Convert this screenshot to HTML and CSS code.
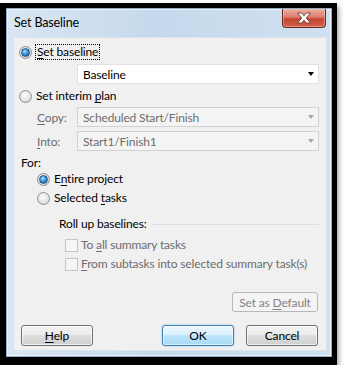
FILE: index.html
```html
<!DOCTYPE html>
<html lang="en">
<head>
    <meta charset="UTF-8">
    <title>Set Baseline</title>
    <link rel="stylesheet" href="styles.css">
</head>

<body>

<div class="shadow">
<div class="window">
    <div class="titlebar">
        <span class="title">Set Baseline</span>
        <div class="close">
            <svg width="16" height="12" viewBox="0 0 16 12">
                <path d="M1.5 1h4.2l2.3 2.8 2.3-2.8h4.2l-4.3 5 4.3 5h-4.2l-2.3-2.8-2.3 2.8h-4.2l4.3-5z" fill="#fff" stroke="#6e3a33" stroke-width="0.9" stroke-linejoin="round"/>
            </svg>
        </div>
    </div>

    <div class="panel">
        <!-- Baseline option -->
        <div class="row first">
            <span class="radio on"></span>
            <span class="label focus"><u>S</u>et baseline</span>
        </div>
        <div class="combo main">
            <span>Baseline</span>
            <span class="arrow"></span>
        </div>

        <!-- Interim plan option -->
        <div class="row second">
            <span class="radio"></span>
            <span class="label">Set interim <u>p</u>lan</span>
        </div>
        <div class="field copy">
            <span class="flabel"><u>C</u>opy:</span>
            <div class="combo off">
                <span>Scheduled Start/Finish</span>
                <span class="arrow"></span>
            </div>
        </div>
        <div class="field into">
            <span class="flabel"><u>I</u>nto:</span>
            <div class="combo off">
                <span>Start1/Finish1</span>
                <span class="arrow"></span>
            </div>
        </div>

        <!-- Scope -->
        <div class="for">For:</div>
        <div class="row sub">
            <span class="radio on"></span>
            <span class="label">E<u>n</u>tire project</span>
        </div>
        <div class="row sub second-sub">
            <span class="radio"></span>
            <span class="label">Selected <u>t</u>asks</span>
        </div>

        <div class="group-head">
            <span>Roll up baselines:</span>
            <span class="sep"></span>
        </div>
        <div class="check-row">
            <span class="check"></span>
            <span class="label">To <u>a</u>ll summary tasks</span>
        </div>
        <div class="check-row second-check">
            <span class="check"></span>
            <span class="label"><u>F</u>rom subtasks into selected summary task(s)</span>
        </div>

        <div class="default-row">
            <button class="btn disabled">Set as <u>D</u>efault</button>
        </div>

        <div class="buttons">
            <button class="btn help"><u>H</u>elp</button>
            <button class="btn ok">OK</button>
            <button class="btn">Cancel</button>
        </div>
    </div>
</div>
</div>

</body>
</html>
```

FILE: styles.css
```css
* {
    box-sizing: border-box;
}
body {
    margin: 0;
    background: #fff;
    font-family: Lato, "Noto Sans", sans-serif;
    font-size: 12px;
    letter-spacing: -0.15px;
    color: #000;
}
u {
    text-underline-offset: 2px;
}
.shadow {
    margin-top: 3px;
    width: 337px;
    height: 362px;
    padding: 5px 5px 8px 6px;
    background: #000;
    box-shadow: 2px 3px 5px rgba(0, 0, 0, 0.35);
}
.window {
    width: 326px;
    height: 349px;
    padding: 0 4px 5px 6px;
    border: 1px solid #8fa9c4;
    box-shadow: inset 0 0 0 1px rgba(255, 255, 255, 0.6);
    background: linear-gradient(to right, #d9e6f3, #c6d9ec 45%, #cfe0f0);
}
.titlebar {
    display: flex;
    align-items: flex-start;
    height: 28px;
}
.title {
    padding: 6px 0 0 1px;
    font-size: 12.5px;
    line-height: 16px;
}
.close {
    margin-left: auto;
    margin-right: 1px;
    width: 44px;
    height: 19px;
    border: 1px solid #6d2c22;
    border-top: none;
    border-radius: 0 0 4px 4px;
    background: linear-gradient(to bottom, #eab0a2, #d97e70 45%, #c4442f 55%, #d0644c);
    display: flex;
    align-items: center;
    justify-content: center;
    box-shadow: inset 0 0 0 1px rgba(255, 200, 190, 0.45);
}
.panel {
    width: 314px;
    height: 314px;
    background: #f0f0f0;
    border: 1px solid #dde3ea;
    padding: 6px 7px 0 5px;
}
.row {
    display: flex;
    align-items: center;
    height: 16px;
}
.row .label {
    margin-left: 4px;
}
.row.second {
    margin-top: 4px;
}
.label {
    line-height: 16px;
    white-space: nowrap;
}
.label.focus {
    margin-left: 3px;
    padding: 0 1px;
    border: 1px dotted #000;
    line-height: 14px;
}
.radio {
    width: 13px;
    height: 13px;
    flex: none;
    border-radius: 50%;
    border: 1px solid #8b8e91;
    background: radial-gradient(circle at 45% 40%, #fdfdfd, #e4e4e4 55%, #cdcdcd);
    display: flex;
    align-items: center;
    justify-content: center;
}
.radio.on::after {
    content: "";
    width: 7px;
    height: 7px;
    border-radius: 50%;
    border: 1px solid #1d5690;
    background: radial-gradient(circle at 40% 35%, #b4e0fb, #3d93d6 45%, #0f4c8a);
}
.combo {
    display: flex;
    align-items: center;
    height: 20px;
    border: 1px solid #e2e2e2;
    background: #fff;
    padding: 0 4px 0 5px;
}
.combo span:first-child {
    flex: 1;
}
.combo.main {
    margin: 4px 0 0 58px;
    width: 242px;
}
.arrow {
    width: 0;
    height: 0;
    border-left: 3.5px solid transparent;
    border-right: 3.5px solid transparent;
    border-top: 4px solid #000;
}
.combo.off {
    background: #f4f4f4;
    border-color: #d2d2d2;
    color: #6d6d6d;
}
.combo.off .arrow {
    border-top-color: #a9a9a9;
}
.field {
    display: flex;
    align-items: center;
    justify-content: space-between;
}
.field.copy {
    margin-top: 3px;
}
.field.into {
    margin-top: 4px;
}
.field .combo {
    width: 242px;
}
.flabel {
    margin-left: 18px;
    color: #6d6d6d;
}
.for {
    margin: 4px 0 0 2px;
    line-height: 16px;
}
.row.sub {
    margin-left: 18px;
}
.row.second-sub {
    margin-top: 3px;
}
.group-head {
    display: flex;
    align-items: center;
    margin: 10px 0 0 40px;
    line-height: 16px;
}
.sep {
    flex: 1;
    height: 1px;
    margin-left: 5px;
    background: #d5dfe5;
}
.check-row {
    display: flex;
    align-items: center;
    height: 16px;
    margin: 5px 0 0 46px;
    color: #6d6d6d;
}
.check-row.second-check {
    margin-top: 3px;
}
.check {
    width: 13px;
    height: 13px;
    margin-right: 3px;
    border: 1px solid #c6c6c6;
    background: #f6f6f6;
}
.default-row {
    display: flex;
    justify-content: flex-end;
    margin: 20px 1px 0 0;
}
.btn {
    font-family: inherit;
    font-size: 12px;
    letter-spacing: inherit;
    color: #000;
    width: 72px;
    height: 21px;
    padding: 0;
    border: 1px solid #707070;
    border-radius: 3px;
    background: linear-gradient(to bottom, #f2f2f2, #ebebeb 50%, #dddddd 50%, #cfcfcf);
    box-shadow: inset 0 0 0 1px rgba(255, 255, 255, 0.7);
}
.btn.disabled {
    width: 86px;
    height: 20px;
    color: #838383;
    border-color: #b5b9bc;
    background: #f4f4f4;
    box-shadow: none;
}
.buttons {
    display: flex;
    gap: 12px;
    margin: 13px 1px 0 2px;
}
.btn.help {
    margin-right: auto;
}
.btn.ok {
    border-color: #3c7fb1;
    background: linear-gradient(to bottom, #eaf6fd, #d9f0fc 50%, #bee6fd 50%, #a7d9f5);
    box-shadow: inset 0 0 0 1px rgba(255, 255, 255, 0.6), 0 0 2px #7cc4f0;
}
```
